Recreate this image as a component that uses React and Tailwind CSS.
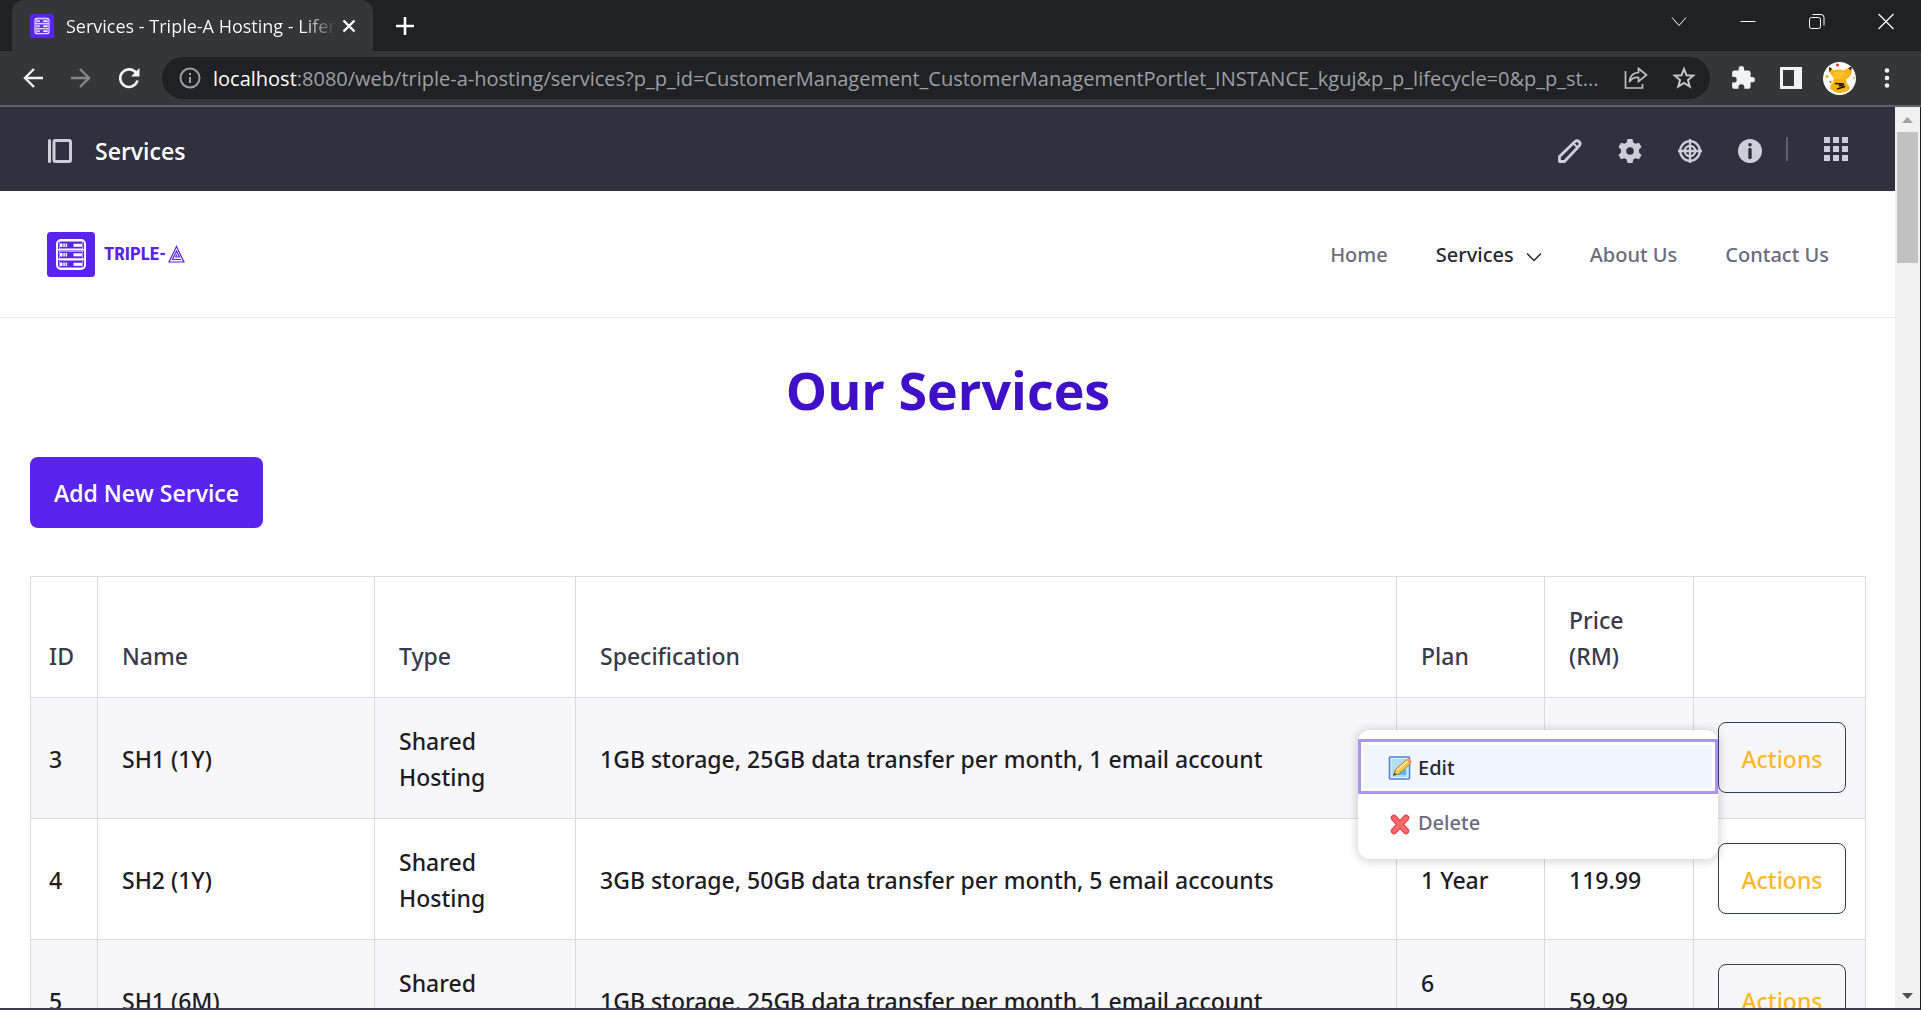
import React from 'react';

const COLUMNS = [
  { label: 'ID', style: 'w-[67px] px-[18px]' },
  { label: 'Name', style: 'w-[277px] px-6' },
  { label: 'Type', style: 'w-[201px] px-6' },
  { label: 'Specification', style: 'px-6' },
  { label: 'Plan', style: 'w-[148px] px-6' },
  { label: 'Price (RM)', style: 'w-[149px] pl-6 pr-14' },
  { label: '', style: 'w-[172px] px-6' },
];

const ROWS = [
  { id: 3, name: 'SH1 (1Y)', type: 'Shared Hosting', spec: '1GB storage, 25GB data transfer per month, 1 email account', plan: '', price: '', open: true },
  { id: 4, name: 'SH2 (1Y)', type: 'Shared Hosting', spec: '3GB storage, 50GB data transfer per month, 5 email accounts', plan: '1 Year', price: '119.99' },
  { id: 5, name: 'SH1 (6M)', type: 'Shared Hosting', spec: '1GB storage, 25GB data transfer per month, 1 email account', plan: '6 Months', price: '59.99' },
];

function ServerIcon({ className }) {
  return (
    <svg className={className} viewBox="0 0 48 45" preserveAspectRatio="none" aria-hidden="true">
      <rect width="48" height="45" rx="3.5" fill="#5924eb" />
      <rect x="10" y="8" width="28" height="29" rx="4" fill="none" stroke="#fff" strokeWidth="2" />
      {[9, 18.5, 28].map((y) => (
        <g key={y} fill="#fff">
          <rect x="12" y={y + 0.5} width="24" height="7.5" />
          <rect x="12.5" y={y + 1} width="23" height="6.5" fill="#5924eb" />
          <rect x="13" y={y + 2.5} width="2.5" height="3.5" />
          <rect x="16.3" y={y + 2.5} width="1.5" height="3.5" />
          <rect x="18.6" y={y + 2.5} width="1.5" height="3.5" />
          <rect x="26.500" y={y + 2.8} width="8.500" height="3" />
        </g>
      ))}
      <path d="M11 17.8h26M11 27.3h26" stroke="#fff" strokeWidth="1.5" />
    </svg>
  );
}

function TabStrip() {
  return (
    <div className="flex h-[51px] shrink-0 items-stretch bg-[#202124] pl-3">
      <div className="flex w-[361px] items-center rounded-t-xl bg-[#35363a] pl-[18px] pr-[14px]">
        <ServerIcon className="size-6 shrink-0" />
        <span className="ml-3 bg-linear-to-r from-white from-88% to-transparent bg-clip-text text-lg whitespace-nowrap text-transparent">
          Services - Triple-A Hosting - Lifer
        </span>
        <button aria-label="Close tab" className="ml-auto">
          <svg className="size-5" viewBox="0 0 20 20" stroke="#fff" strokeWidth="2.4"><path d="M4.5 4.500l11 11M15.500 4.500l-11 11" /></svg>
        </button>
      </div>
      <button aria-label="New tab" className="ml-5 self-center">
        <svg className="size-6" viewBox="0 0 24 24" stroke="#fff" strokeWidth="2.6"><path d="M12 3v18M3 12h18" /></svg>
      </button>
      <div className="ml-auto flex items-start pr-px pt-[9px]">
        <button aria-label="Search tabs" className="flex w-[69px] justify-center">
          <svg className="size-6" viewBox="0 0 24 24" fill="none" stroke="#fff" strokeWidth="1"><path d="M5 8.500l7 8 7-8" /></svg>
        </button>
        <button aria-label="Minimize" className="flex w-[69px] justify-center">
          <svg className="size-6" viewBox="0 0 24 24" stroke="#fff"><path d="M4.500 12.500h15" /></svg>
        </button>
        <button aria-label="Restore" className="flex w-[69px] justify-center">
          <svg className="size-6" viewBox="0 0 24 24" fill="none" stroke="#fff"><rect x="4.500" y="8.500" width="11" height="11" rx="2" /><path d="M7.500 5.500h8.500q3 0 3 3v8" /></svg>
        </button>
        <button aria-label="Close window" className="flex w-[69px] justify-center">
          <svg className="size-6" viewBox="0 0 24 24" stroke="#fff" strokeWidth="1.2"><path d="M4.500 5l15 15M19.500 5l-15 15" /></svg>
        </button>
      </div>
    </div>
  );
}

function Avatar() {
  return (
    <svg className="size-[33px]" viewBox="0 0 33 33" aria-hidden="true">
      <circle cx="16.500" cy="16.500" r="16.500" fill="#fff" />
      <path d="M6 5l5 3.500q6-2 9 0l8-3.500q2 5-1 9-2 3-4 3.500l1 4q3 2 2.500 6l-4 2.500q-6 2-11 0l-4-3q-1-4 2-6l1.500-5q-5-4-5-11z" fill="#fbb216" />
      <path d="M11 10q6-2 11 1l-5 6-7-1z" fill="#fcc42c" />
      <path d="M6 5l3 1.500-2.500 4zM25 6l4-1.500-1 4z" fill="#3a2210" />
      <path d="M12 21.500l9 .5-5 1.500 6 1-8 2.500" fill="none" stroke="#1d160c" strokeWidth="1.500" />
      <circle cx="14.500" cy="3" r="1.600" fill="#f03c22" />
      <circle cx="7.500" cy="20" r="1" fill="#f03c22" />
      <circle cx="4" cy="14.500" r="1.600" fill="#f9a51a" />
      <circle cx="31" cy="16" r="1" fill="#f9a51a" />
    </svg>
  );
}

function Toolbar() {
  return (
    <div className="flex h-14 shrink-0 items-center border-b-2 border-[#5f6164] bg-[#35363a] pl-5 pr-[22px]">
      <button aria-label="Back">
        <svg className="size-[26px]" viewBox="0 0 26 26" fill="none" stroke="#f1f3f4" strokeWidth="2.4"><path d="M23 13H5M14 4l-9 9 9 9" /></svg>
      </button>
      <button aria-label="Forward" className="ml-[22px]">
        <svg className="size-[26px]" viewBox="0 0 26 26" fill="none" stroke="#85878b" strokeWidth="2.4"><path d="M3 13h18M12 4l9 9-9 9" /></svg>
      </button>
      <button aria-label="Reload" className="ml-[22px]">
        <svg className="size-[26px]" viewBox="0 0 26 26" fill="none" stroke="#f1f3f4" strokeWidth="2.6"><path d="M20.500 8.500A8.800 8.800 0 1 0 21.500 15.500" /><path d="M23.500 3v8.500H15z" fill="#f1f3f4" stroke="none" /></svg>
      </button>
      <div className="ml-5 flex h-[42px] min-w-0 flex-1 items-center rounded-full bg-[#202124] px-[14px]">
        <svg className="ml-[2px] size-6 shrink-0" viewBox="0 0 24 24" fill="none" stroke="#9aa0a6" strokeWidth="2"><circle cx="12" cy="12" r="9.500" /><path d="M12 11v6M12 7v2" /></svg>
        <div className="ml-[11px] min-w-0 flex-1 truncate pt-px text-xl text-[#9aa0a6]">
          <span className="text-white">localhost</span>:8080/web/triple-a-hosting/services?p_p_id=CustomerManagement_CustomerManagementPortlet_INSTANCE_kguj&amp;p_p_lifecycle=0&amp;p_p_st...
        </div>
        <button aria-label="Share this page">
          <svg className="size-6" viewBox="0 0 24 24" fill="none" stroke="#bdc1c6" strokeWidth="1.700"><path d="M1.500 5v17h17v-4" /><path d="M14.500 2.500l8 6.500-8 6.500v-4q-6-.5-9 4.500.5-9 9-9.500z" /></svg>
        </button>
        <button aria-label="Bookmark this tab" className="ml-6">
          <svg className="size-6" viewBox="0 0 24 24" fill="none" stroke="#c4c7cb" strokeWidth="2"><path d="M12 3l2.500 6.300 6.700.4-5.200 4.300 1.700 6.600L12 17l-5.700 3.600L8 14 2.800 9.700l6.700-.4z" /></svg>
        </button>
      </div>
      <button aria-label="Extensions" className="ml-5">
        <svg className="size-[26px]" viewBox="0 0 24 24" fill="#f1f3f4"><path d="M20.500 11H19V7c0-1.100-.9-2-2-2h-4V3.500a2.500 2.500 0 0 0-5 0V5H4c-1.100 0-2 .9-2 2v3.800h1.500a2.700 2.700 0 0 1 0 5.400H2V20c0 1.100.9 2 2 2h3.800v-1.500a2.700 2.700 0 0 1 5.400 0V22H17c1.100 0 2-.9 2-2v-4h1.500a2.500 2.500 0 0 0 0-5z" /></svg>
      </button>
      <button aria-label="Side panel" className="ml-6">
        <svg className="size-[22px]" viewBox="0 0 22 22"><rect width="22" height="22" fill="#f1f3f4" /><rect x="3" y="3" width="11" height="16" fill="#35363a" /></svg>
      </button>
      <button aria-label="Profile" className="ml-[21px]"><Avatar /></button>
      <button aria-label="Browser menu" className="ml-[19px]">
        <svg className="size-6" viewBox="0 0 24 24" fill="#f1f3f4"><circle cx="12" cy="4.500" r="2.300" /><circle cx="12" cy="12" r="2.300" /><circle cx="12" cy="19.500" r="2.300" /></svg>
      </button>
    </div>
  );
}

function ControlBar() {
  return (
    <div className="flex h-[84px] items-center bg-[#30313f] pt-1 pl-12 pr-[47px]">
      <button aria-label="Toggle product menu">
        <svg className="size-6" viewBox="0 0 24 24" fill="none" stroke="#cdced9" strokeWidth="3"><path d="M1.500 1.500v21" strokeLinecap="round" /><rect x="6" y="1.500" width="16.500" height="21" rx="1.500" /></svg>
      </button>
      <span className="ml-[23px] pb-px text-[23px] leading-8 font-semibold text-white">Services</span>
      <button aria-label="Edit page" className="ml-auto">
        <svg className="size-6" viewBox="0 0 24 24" fill="none" stroke="#cdced9" strokeWidth="2.800" strokeLinejoin="round"><path d="M1.500 22.500v-5L17 2.500q2-1.500 4 0 2 2 .5 4L6.500 22.500z" /><path d="M15.500 4.500l4 4" strokeWidth="2" /></svg>
      </button>
      <button aria-label="Configure page" className="ml-9">
        <svg className="size-6" viewBox="0 0 24 24" fill="#cdced9" fillRule="evenodd"><path d="M9.500 0h5l.8 3.400 2.300 1.300L21 3.700l2.500 4.200L21 10.600v2.800l2.500 2.700-2.500 4.200-3.400-1-2.300 1.300-.8 3.400h-5l-.8-3.400-2.300-1.300-3.400 1L.5 16.100 3 13.400v-2.800L.5 7.900 3 3.700l3.400 1 2.300-1.300zM12 8.200a3.800 3.800 0 1 0 0 7.600 3.800 3.800 0 0 0 0-7.600z" /></svg>
      </button>
      <button aria-label="Simulation" className="ml-9">
        <svg className="size-6" viewBox="0 0 24 24" fill="none" stroke="#cdced9" strokeWidth="2.300"><circle cx="12" cy="12" r="9.800" /><circle cx="12" cy="12" r="5.200" /><path d="M12 0v24M0 12h24" /></svg>
      </button>
      <button aria-label="Information" className="ml-9">
        <svg className="size-6" viewBox="0 0 24 24"><circle cx="12" cy="12" r="12" fill="#cdced9" /><path d="M12 10.500v8" stroke="#30313f" strokeWidth="3.400" strokeLinecap="round" /><circle cx="12" cy="5.800" r="1.800" fill="#30313f" /></svg>
      </button>
      <span className="mb-1 ml-6 h-6 w-[2px] bg-[#5f6072]" />
      <button aria-label="Applications" className="mb-1 ml-9">
        <svg className="size-6" viewBox="0 0 24 24" fill="#cdced9">
          {[0, 9, 18].map((y) => [0, 9, 18].map((x) => <rect key={`${x}-${y}`} x={x} y={y} width="6" height="6" />))}
        </svg>
      </button>
    </div>
  );
}

function SiteHeader() {
  return (
    <header className="flex h-[127px] items-center justify-between border-b border-[#ebebee] pl-[47px] pr-[66px]">
      <a href="#home" className="flex items-center" aria-label="Triple-A home">
        <ServerIcon className="h-[45px] w-12" />
        <span className="ml-[9px] font-['Roboto_Condensed','Liberation_Sans',sans-serif] text-[19px] leading-6 font-bold text-[#5924eb]">TRIPLE-</span>
        <svg className="ml-[2px] h-[18px] w-[17px]" viewBox="0 0 17 18" fill="none" stroke="#5924eb" strokeWidth="1.200"><path d="M8.500 1.500L16 17H1z" /><path d="M13 14.500H4.500L8.500 6l3 6H7.800l.9-2.500" /></svg>
      </a>
      <nav className="flex items-center gap-12 pt-px font-['Noto_Sans',sans-serif] text-xl font-medium text-[#6b6c7e]">
        <a href="#home">Home</a>
        <a href="#services" className="flex items-center text-[#272833]">
          Services
          <svg className="ml-3 mt-1 h-[14px] w-4" viewBox="0 0 16 14" fill="none" stroke="#272833" strokeWidth="1.500"><path d="M1 3.500l7 7 7-7" /></svg>
        </a>
        <a href="#about">About Us</a>
        <a href="#contact">Contact Us</a>
      </nav>
    </header>
  );
}

function EditIcon() {
  return (
    <svg className="size-6" viewBox="0 0 24 24" aria-hidden="true">
      <rect x="1.500" y="1" width="20" height="22" rx="1" fill="#e3f1fd" stroke="#4a86cf" strokeWidth="1.600" />
      <rect x="3.500" y="3" width="16" height="18" fill="#b4dcf8" />
      <path d="M5 19h13v-6z" fill="#58b8f2" />
      <path d="M5.500 19.500l2-6L18.500 3.500l4 4L11.500 17.500z" fill="#f7c84e" stroke="#a9792b" strokeWidth="1" />
      <path d="M8.500 14.500L19.500 5" stroke="#fdeaa0" strokeWidth="1.500" />
      <path d="M18.500 3.500l2-1.500 3.500 3-1.500 2.500z" fill="#ef9f6c" />
      <path d="M5.500 19.500l1-3 2 2z" fill="#4a3a2a" />
    </svg>
  );
}

function ActionMenu() {
  return (
    <div className="absolute top-2 right-full z-10 w-[360px] rounded-xl bg-white pt-[9px] pb-2 font-['Noto_Sans',sans-serif] text-xl font-medium shadow-[0_1px_8px_2px_rgba(39,40,51,0.18)]">
      <button className="flex h-[55px] w-full items-center border-3 border-[#ae93f5] p-[3px] text-left text-[#272833]">
        <span className="flex h-full w-full items-center bg-[#f0f5ff] pt-1 pl-6">
          <EditIcon />
          <span className="ml-[6px] pb-px">Edit</span>
        </span>
      </button>
      <button className="flex h-[57px] w-full items-center pt-1 pl-[30px] text-left text-[#6b6c7e]">
        <svg className="size-6" viewBox="0 0 24 24" aria-hidden="true"><path d="M6 6l12 13M18 6L6 19" stroke="#e8454a" strokeWidth="6.500" strokeLinecap="round" /><path d="M6 6l12 13M18 6L6 19" stroke="#fb6b69" strokeWidth="4" strokeLinecap="round" /></svg>
        <span className="ml-[6px] pb-[2px]">Delete</span>
      </button>
    </div>
  );
}

function ServicesTable() {
  return (
    <table className="mt-12 w-full table-fixed border-collapse text-left font-['Noto_Sans',sans-serif] text-[23px] leading-9 font-medium text-[#1c1c24]">
      <thead>
        <tr className="align-bottom text-[#393a4a]">
          {COLUMNS.map((c) => (
            <th key={c.label} className={`${c.style} border border-[#d9d9e2] pt-[25px] pb-[23px] font-medium`}>{c.label}</th>
          ))}
        </tr>
      </thead>
      <tbody>
        {ROWS.map((r) => (
          <tr key={r.id} className="odd:bg-[#f7f7f9]">
            <td className="border border-[#d9d9e2] px-[18px] pt-[25px] pb-[23px]">{r.id}</td>
            <td className="border border-[#d9d9e2] px-6 pt-[25px] pb-[23px]">{r.name}</td>
            <td className="border border-[#d9d9e2] px-6 pt-[25px] pb-[23px]">{r.type}</td>
            <td className="border border-[#d9d9e2] px-6 pt-[25px] pb-[23px]">{r.spec}</td>
            <td className="border border-[#d9d9e2] px-6 pt-[25px] pb-[23px]">{r.plan}</td>
            <td className="border border-[#d9d9e2] px-6 pt-[25px] pb-[23px]">{r.price}</td>
            <td className="border border-[#d9d9e2] px-6 pb-[2px]">
              <div className="relative w-32">
                <button className="h-[71px] w-full rounded-lg border border-[#2e3f55] pt-[3px] text-[23px] font-medium text-[#ffb827]">Actions</button>
                {r.open && <ActionMenu />}
              </div>
            </td>
          </tr>
        ))}
      </tbody>
    </table>
  );
}

function Scrollbar() {
  return (
    <div className="flex w-[25px] shrink-0 flex-col items-center bg-[#f1f1f1]" aria-hidden="true">
      <svg className="h-[25px] w-[25px] shrink-0" viewBox="0 0 25 25"><path d="M7 16l5.500-6 5.500 6z" fill="#a3a3a3" /></svg>
      <div className="h-[131px] w-[21px] shrink-0 bg-[#c1c1c1]" />
      <svg className="mt-auto h-[25px] w-[25px] shrink-0" viewBox="0 0 25 25"><path d="M7 10l5.500 6 5.500-6z" fill="#505050" /></svg>
    </div>
  );
}

export default function App() {
  return (
    <div className="flex h-screen flex-col overflow-hidden bg-white font-['Open_Sans',sans-serif]">
      <TabStrip />
      <Toolbar />
      <div className="flex min-h-0 flex-1 border-r border-b-2 border-r-[#1b1c1f] border-b-[#3a3f4b]">
        <div className="min-w-0 flex-1 overflow-hidden">
          <ControlBar />
          <SiteHeader />
          <main className="pt-[31px] pr-[29px] pl-[30px]">
            <h1 className="text-center text-[52px] leading-[82px] font-bold text-[#4010c8]">Our Services</h1>
            <button className="mt-[26px] block h-[71px] rounded-lg bg-[#5924eb] px-6 pt-[2px] text-[23px] font-semibold text-white">Add New Service</button>
            <ServicesTable />
          </main>
        </div>
        <Scrollbar />
      </div>
    </div>
  );
}
